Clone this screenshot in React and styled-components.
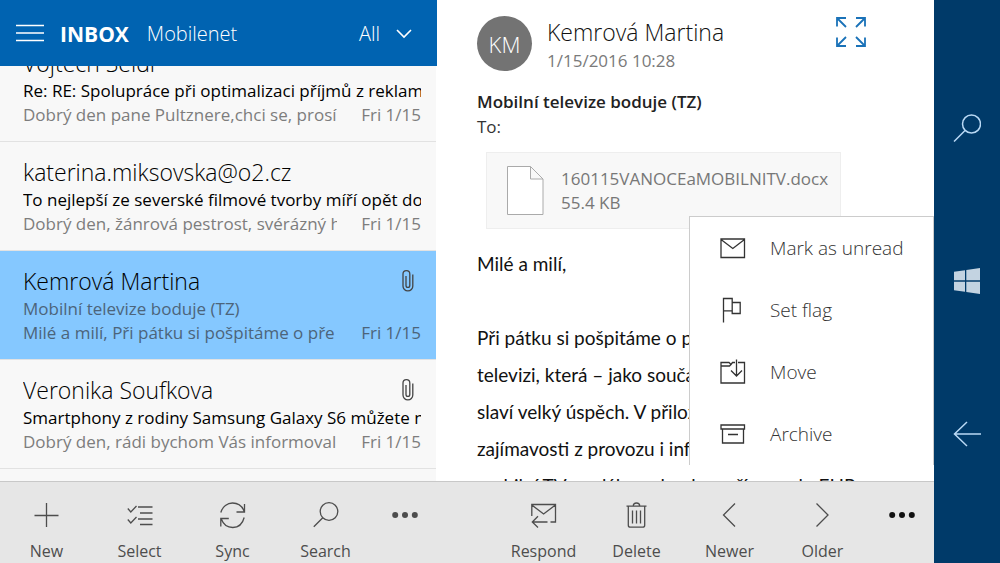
import React, { useLayoutEffect, useRef } from "react";
import styled, { createGlobalStyle } from "styled-components";

const GlobalStyle = createGlobalStyle`
  *, *::before, *::after { box-sizing: border-box; }
  body {
    margin: 0;
    font-family: "Open Sans", "Noto Sans", sans-serif;
    font-size: 17px;
    color: #111;
    background: #fff;
  }
  button { font: inherit; color: inherit; background: none; border: 0; padding: 0; margin: 0; cursor: pointer; }
  h1, h2, h3, p, ul { margin: 0; padding: 0; font-weight: inherit; list-style: none; }
  svg { display: block; flex: none; }
`;

const Shell = styled.div`
  display: flex;
  height: 100vh;
  overflow: hidden;
`;

const Screen = styled.div`
  flex: 1;
  min-width: 0;
  display: grid;
  grid-template-columns: minmax(0, 437fr) minmax(0, 497fr);
`;

const Pane = styled.section`
  position: relative;
  display: flex;
  flex-direction: column;
  min-height: 0;
  min-width: 0;
  background: #fff;
`;

const Header = styled.header`
  flex: none;
  display: flex;
  align-items: center;
  height: 66px;
  padding: 2px 25px 0 16px;
  background: #0063b1;
  color: #fff;
`;

const MenuButton = styled.button`
  margin-right: 16px;
`;

const Folder = styled.h1`
  font-size: 21px;
  line-height: 28px;
  font-weight: 700;
`;

const Account = styled.span`
  margin-left: 18px;
  font-size: 20px;
  line-height: 28px;
  font-weight: 300;
`;

const Filter = styled.button`
  display: flex;
  align-items: center;
  gap: 16px;
  margin-left: auto;
  font-size: 20px;
  line-height: 28px;
  font-weight: 300;
`;

const List = styled.ul`
  flex: 1;
  min-height: 0;
  overflow-y: auto;
  scrollbar-width: none;
  border-right: 1px solid #fff;
  background: #f8f8f8;
`;

const Row = styled.button`
  display: flex;
  flex-direction: column;
  justify-content: flex-start;
  width: 100%;
  height: 109px;
  padding: 14px 15px 0 23px;
  border-bottom: 1px solid #e2e2e2;
  text-align: left;
  background: ${(p) => (p.$selected ? "#85c8ff" : "transparent")};
`;

const RowLine = styled.span`
  display: flex;
  align-items: center;
  justify-content: space-between;
  gap: 24px;
  width: 100%;
  height: ${(p) => (p.$tall ? 32 : 24)}px;
`;

const Clip = styled.span`
  flex: 1;
  min-width: 0;
  overflow: hidden;
  white-space: nowrap;
`;

const Sender = styled(Clip)`
  font-size: 23px;
  line-height: 32px;
  font-weight: 300;
  color: #000;
`;

const Subject = styled(Clip)`
  line-height: 24px;
  color: ${(p) => (p.$read ? "#4c647a" : "#000")};
`;

const Preview = styled(Clip)`
  line-height: 24px;
  color: ${(p) => (p.$selected ? "#4c647a" : "#7d7d7d")};
`;

const When = styled.time`
  line-height: 24px;
  color: ${(p) => (p.$selected ? "#4c647a" : "#7d7d7d")};
`;

const ClipMark = styled.span`
  padding-right: 7px;
  color: #444;
`;

const CommandBar = styled.nav`
  flex: none;
  display: flex;
  justify-content: ${(p) => (p.$end ? "flex-end" : "flex-start")};
  height: 82px;
  border-top: 1px solid #c8c8c8;
  background: #e6e6e6;
`;

const Command = styled.button`
  width: 93px;
  display: flex;
  flex-direction: column;
  align-items: center;
  justify-content: flex-start;
  gap: 8px;
  padding-top: 17px;
  font-size: 16px;
  line-height: 24px;
  color: #4d4d4d;
`;

const More = styled.button`
  width: 65px;
  display: flex;
  justify-content: center;
  align-items: flex-start;
  padding-top: 17px;
  color: ${(p) => (p.$dark ? "#111" : "#4d4d4d")};
`;

const Message = styled.article`
  flex: 1;
  min-height: 0;
  overflow: hidden;
  padding: 16px 0 0 40px;
`;

const MessageHead = styled.header`
  display: flex;
  gap: 15px;
  padding-right: 68px;
`;

const Avatar = styled.span`
  flex: none;
  display: flex;
  align-items: center;
  justify-content: center;
  width: 55px;
  height: 55px;
  border-radius: 50%;
  background: #737373;
  color: #fff;
  font-size: 22px;
  font-weight: 300;
`;

const From = styled.div`
  flex: 1;
  min-width: 0;
`;

const FromName = styled.h2`
  font-size: 23px;
  line-height: 33px;
  font-weight: 300;
`;

const Sent = styled.time`
  display: block;
  line-height: 24px;
  color: #7a7a7a;
`;

const Expand = styled.button`
  align-self: flex-start;
`;

const Title = styled.h3`
  margin-top: 16px;
  font-size: 17px;
  line-height: 26px;
  font-weight: 600;
  color: #222;
`;

const To = styled.p`
  line-height: 24px;
  color: #333;
`;

const Attachment = styled.button`
  display: flex;
  align-items: center;
  gap: 17px;
  width: 355px;
  height: 77px;
  margin: 13px 0 0 9px;
  padding: 0 0 0 20px;
  border: 1px solid #eee;
  background: #f8f8f8;
  text-align: left;
  line-height: 24px;
  color: #777;
`;

const AttachmentText = styled.span`
  display: flex;
  flex-direction: column;
`;

const Body = styled.div`
  margin-top: 16px;
  font-family: Lato, "Open Sans", sans-serif;
  font-size: 19px;
  line-height: 37px;
  color: #111;
`;

const Line = styled.p`
  min-height: 37px;
  white-space: nowrap;
`;

const Popup = styled.ul`
  position: absolute;
  right: 0;
  bottom: 98px;
  width: 245px;
  border: 1px solid #ccc;
  border-bottom: 0;
  background: #fff;
`;

const PopupItem = styled.button`
  display: flex;
  align-items: center;
  gap: 24px;
  width: 100%;
  height: 62px;
  padding-left: 30px;
  font-size: 19px;
  line-height: 28px;
  font-weight: 300;
  color: #333;
`;

const DeviceBar = styled.aside`
  flex: none;
  width: 66px;
  display: flex;
  flex-direction: column;
  padding: 51px 0 53px;
  background: #003a69;
  color: #b9d9f5;
`;

const DeviceKey = styled.button`
  flex: 1;
  display: flex;
  align-items: center;
  justify-content: center;
`;

function Icon({ w = 26, h = 26, sw = 1.3, children }) {
  return (
    <svg width={w} height={h} viewBox={`0 0 ${w} ${h}`} fill="none" stroke="currentColor" strokeWidth={sw} aria-hidden="true">
      {children}
    </svg>
  );
}

const Dots = () => (
  <Icon w={26} h={32}>
    <g fill="currentColor" stroke="none">
      <circle cx="3.2" cy="16" r="3" />
      <circle cx="13" cy="16" r="3" />
      <circle cx="22.8" cy="16" r="3" />
    </g>
  </Icon>
);

const Paperclip = () => (
  <Icon w={12} h={24} sw={1.3}>
    <path d="M10.8 5.500V17a4.900 4.900 0 0 1-9.800 0V5a3.400 3.400 0 0 1 6.800 0v11.500a1.900 1.900 0 0 1-3.800 0V7" />
  </Icon>
);

const icons = {
  plus: <Icon w={26} h={32}><path d="M12.500 4v24M.5 16.500h24" /></Icon>,
  select: (
    <Icon w={26} h={32}>
      <path d="M11 8h14.500M13 14h12.500M11 20h14.500M13 25.500h12.500M.8 9.500l3 3.500 5.700-6M.8 20.500l3 3.500 5.700-6" />
    </Icon>
  ),
  sync: (
    <Icon w={26} h={32}>
      <path d="M.8 13.500C2.500 7.500 7.500 4 12.500 4c5 0 9.500 2.500 11.700 8.500M24.500 5v8h-8M24.200 18.500C22.500 25 18 28.500 12.800 28.500c-5 0-9.300-2.500-11.500-8.500M.8 27.500v-8h8" />
    </Icon>
  ),
  search: <Icon w={26} h={32}><circle cx="16" cy="12.500" r="8.800" /><path d="M9.800 18.800L.8 27.800" /></Icon>,
  respond: (
    <Icon w={26} h={32}>
      <path d="M.8 17V5.500h23.700v17.500h-5M.8 6l11.800 9 11.800-9M16.500 23H1.500M7 17.300L1.300 23 7 28.500" />
    </Icon>
  ),
  trash: (
    <Icon w={26} h={32}>
      <path d="M2.500 7.200h20M4.300 7.200v19a2 2 0 0 0 2 2h12.400a2 2 0 0 0 2-2v-19M9.300 7c0-4 6.400-4 6.400 0M8.500 11.500v13M12.500 11.500v13M16.500 11.500v13" />
    </Icon>
  ),
  prev: <Icon w={26} h={32}><path d="M18 4.500L6.500 16 18 27.500" /></Icon>,
  next: <Icon w={26} h={32}><path d="M6.500 4.500L18 16 6.500 27.500" /></Icon>,
  mail: <Icon><path d="M1 4h23.500v18.500H1zM1 4.500l11.800 9 11.700-9" /></Icon>,
  flag: <Icon><path d="M3.500 25.500V1.500h8.700v12.300H3.500M12.200 5.500h8v11h-8v-3" /></Icon>,
  move: <Icon><path d="M15 3.500h-2.500l-1.500 2-2-2H1v20.500h23.500V3.500h-6.500M1 7h8.500l1.500-1.500M16.500 .5v16.500M11 11.500l5.500 5.500 5.500-5.500" /></Icon>,
  archive: <Icon><path d="M1 4h23.500v4H1zM2.500 8v14h21v-14M8 13.500h10" /></Icon>,
};

const messages = [
  { from: "Vojtěch Seidl", subject: "Re: RE: Spolupráce při optimalizaci příjmů z reklamních", preview: "Dobrý den pane Pultznere,chci se, prosí" },
  { from: "katerina.miksovska@o2.cz", subject: "To nejlepší ze severské filmové tvorby míří opět do", preview: "Dobrý den, žánrová pestrost, svérázný h" },
  { from: "Kemrová Martina", subject: "Mobilní televize boduje (TZ)", preview: "Milé a milí, Při pátku si pošpitáme o pře", clip: true, selected: true },
  { from: "Veronika Soufkova", subject: "Smartphony z rodiny Samsung Galaxy S6 můžete n", preview: "Dobrý den, rádi bychom Vás informoval", clip: true },
  { from: "", subject: "", preview: "" },
];

const listCommands = [["plus", "New"], ["select", "Select"], ["sync", "Sync"], ["search", "Search"]];
const mailCommands = [["respond", "Respond"], ["trash", "Delete"], ["prev", "Newer"], ["next", "Older"]];
const popupItems = [["mail", "Mark as unread"], ["flag", "Set flag"], ["move", "Move"], ["archive", "Archive"]];

const bodyLines = [
  "Milé a milí,",
  "",
  "Při pátku si pošpitáme o p",
  "televizi, která – jako součá",
  "slaví velký úspěch. V přilož",
  "zajímavosti z provozu i info",
  "mobilní TV na dále vedou bez přísunu do EHP",
];

function Commands({ items, end }) {
  return (
    <CommandBar $end={end}>
      {items.map(([icon, label]) => (
        <Command key={label}>
          {icons[icon]}
          {label}
        </Command>
      ))}
      <More $dark={end} aria-label="More"><Dots /></More>
    </CommandBar>
  );
}

export default function App() {
  const list = useRef(null);
  useLayoutEffect(() => {
    list.current.scrollTop = 33;
  }, []);

  return (
    <>
      <GlobalStyle />
      <Shell>
        <Screen>
          <Pane>
            <Header>
              <MenuButton aria-label="Menu">
                <Icon w={28} h={28} sw={1.4}><path d="M0 5.500h28M0 13h28M0 20.500h28" /></Icon>
              </MenuButton>
              <Folder>INBOX</Folder>
              <Account>Mobilenet</Account>
              <Filter>
                All
                <Icon w={16} h={12} sw={1.6}><path d="M1 2l7 7 7-7" /></Icon>
              </Filter>
            </Header>
            <List ref={list}>
              {messages.map((m, i) => (
                <li key={i}>
                  <Row $selected={m.selected}>
                    <RowLine $tall>
                      <Sender>{m.from}</Sender>
                      {m.clip && <ClipMark><Paperclip /></ClipMark>}
                    </RowLine>
                    <RowLine><Subject $read={m.selected}>{m.subject}</Subject></RowLine>
                    <RowLine>
                      <Preview $selected={m.selected}>{m.preview}</Preview>
                      {m.from && <When $selected={m.selected}>Fri 1/15</When>}
                    </RowLine>
                  </Row>
                </li>
              ))}
            </List>
            <Commands items={listCommands} />
          </Pane>
          <Pane>
            <Message>
              <MessageHead>
                <Avatar>KM</Avatar>
                <From>
                  <FromName>Kemrová Martina</FromName>
                  <Sent>1/15/2016 10:28</Sent>
                </From>
                <Expand aria-label="Full screen">
                  <Icon w={30} h={32} sw={1.8}>
                    <path stroke="#1a72b8" d="M1 10.500V2h9M1 2l9 9M20 2h9v8.500M29 2l-9 9M1 21.500V30h9M1 30l9-9M20 30h9v-8.500M29 30l-9-9" />
                  </Icon>
                </Expand>
              </MessageHead>
              <Title>Mobilní televize boduje (TZ)</Title>
              <To>To:</To>
              <Attachment>
                <Icon w={37} h={49} sw={1}>
                  <path fill="#fff" stroke="#aaa" d="M.5.5h23l12.500 12.500v35.500H.5zM23.500.5V13H36" />
                </Icon>
                <AttachmentText>
                  <span>160115VANOCEaMOBILNITV.docx</span>
                  <span>55.4 KB</span>
                </AttachmentText>
              </Attachment>
              <Body>
                {bodyLines.map((t, i) => <Line key={i}>{t}</Line>)}
              </Body>
            </Message>
            <Popup>
              {popupItems.map(([icon, label]) => (
                <li key={label}>
                  <PopupItem>{icons[icon]}{label}</PopupItem>
                </li>
              ))}
            </Popup>
            <Commands items={mailCommands} end />
          </Pane>
        </Screen>
        <DeviceBar>
          <DeviceKey aria-label="Search">
            <Icon w={28} h={28} sw={1.5}><circle cx="18.500" cy="10" r="9" /><path d="M12 16.500L1 27.500" /></Icon>
          </DeviceKey>
          <DeviceKey aria-label="Start">
            <Icon w={26} h={26}>
              <path fill="#c3d3e1" stroke="none" d="M0 3.800L11 2.200V12.300H0zM12.300 2L26 0V12.300H12.300zM0 13.700H11V23.800L0 22.200zM12.300 13.700H26V26L12.300 24z" />
            </Icon>
          </DeviceKey>
          <DeviceKey aria-label="Back">
            <Icon w={28} h={26} sw={1.5}><path d="M28 13H1M14 1L1.500 13 14 25" /></Icon>
          </DeviceKey>
        </DeviceBar>
      </Shell>
    </>
  );
}
